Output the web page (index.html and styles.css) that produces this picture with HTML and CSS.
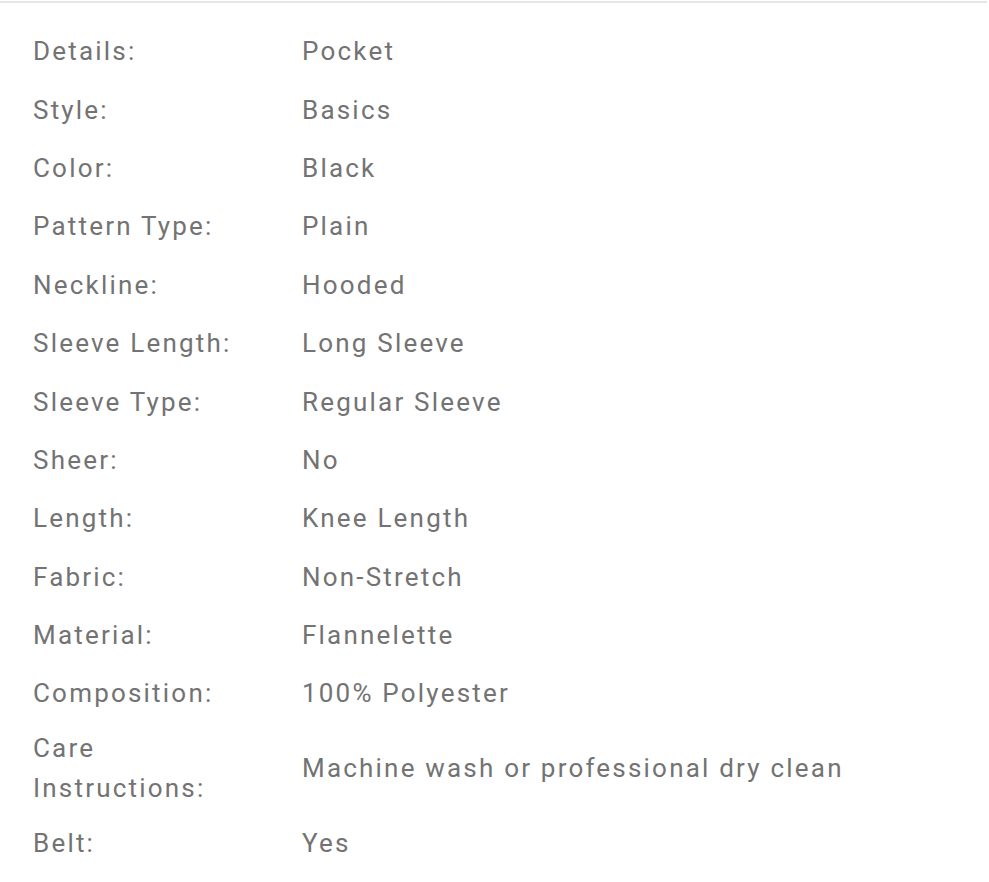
FILE: index.html
```html
<!DOCTYPE html>
<html>
<head>
<meta charset="utf-8">
<link rel="stylesheet" href="styles.css">
</head>
<body>
<div class="specs">
  <div class="row"><div class="label">Details:</div><div class="value">Pocket</div></div>
  <div class="row"><div class="label">Style:</div><div class="value">Basics</div></div>
  <div class="row"><div class="label">Color:</div><div class="value">Black</div></div>
  <div class="row"><div class="label">Pattern Type:</div><div class="value">Plain</div></div>
  <div class="row"><div class="label">Neckline:</div><div class="value">Hooded</div></div>
  <div class="row"><div class="label">Sleeve Length:</div><div class="value">Long Sleeve</div></div>
  <div class="row"><div class="label">Sleeve Type:</div><div class="value">Regular Sleeve</div></div>
  <div class="row"><div class="label">Sheer:</div><div class="value">No</div></div>
  <div class="row"><div class="label">Length:</div><div class="value">Knee Length</div></div>
  <div class="row"><div class="label">Fabric:</div><div class="value">Non-Stretch</div></div>
  <div class="row"><div class="label">Material:</div><div class="value">Flannelette</div></div>
  <div class="row"><div class="label">Composition:</div><div class="value">100% Polyester</div></div>
  <div class="row"><div class="label">Care Instructions:</div><div class="value">Machine wash or professional dry clean</div></div>
  <div class="row"><div class="label">Belt:</div><div class="value">Yes</div></div>
</div>
</body>
</html>
```
FILE: styles.css
```css
html, body {
  margin: 0;
  padding: 0;
  background: #fff;
}
body {
  font-family: Roboto, "Noto Sans", sans-serif;
  font-size: 26px;
  line-height: 40px;
  letter-spacing: 2.2px;
  color: #737373;
}
.specs {
  margin-top: 1px;
  margin-right: 2px;
  border-top: 2px solid #e6e6e6;
  padding: 19px 0 0 33px;
}
.row {
  display: flex;
  align-items: center;
  min-height: 58.4px;
  padding: 5.45px 0;
  box-sizing: border-box;
}
.label {
  width: 225px;
  flex: none;
}
.value {
  margin-left: 44px;
}
```
